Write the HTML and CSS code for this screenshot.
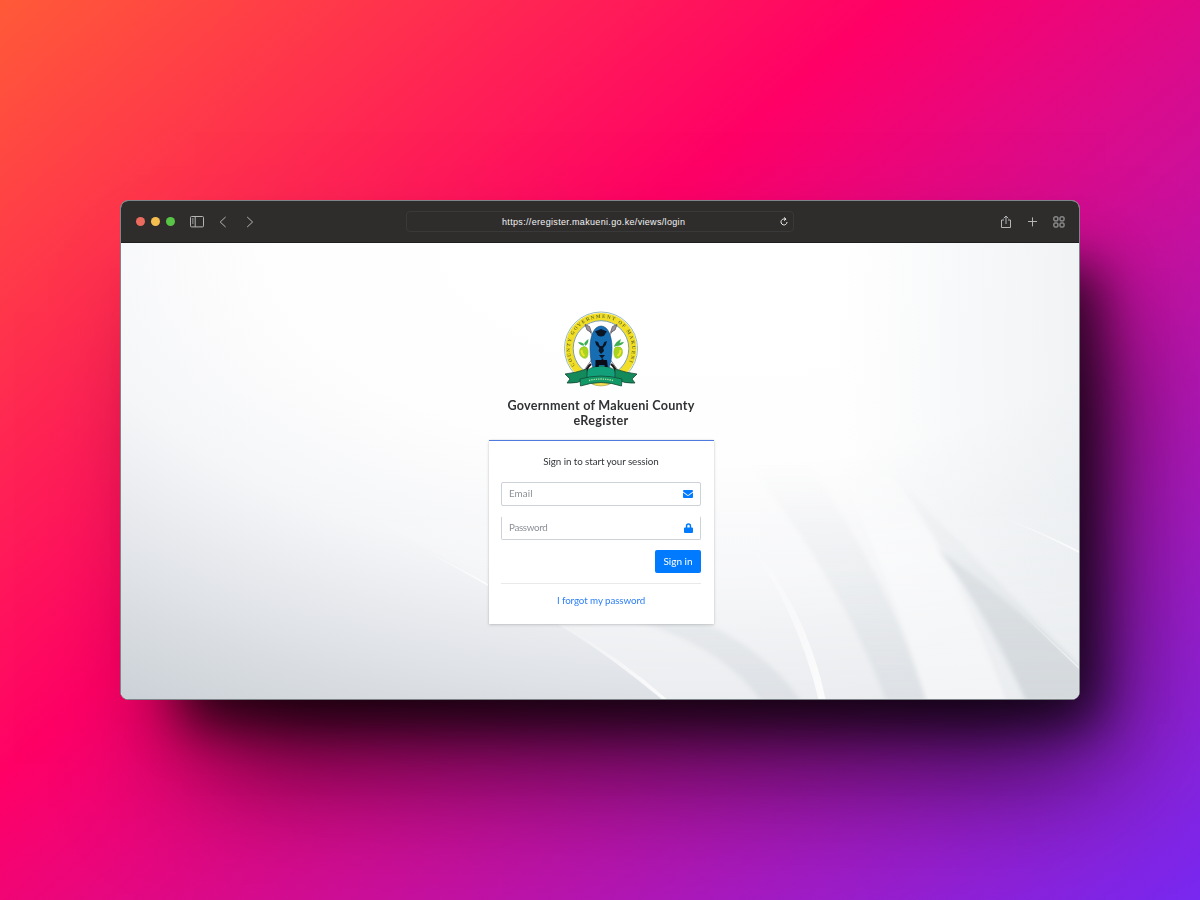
FILE: index.html
```html
<!DOCTYPE html>
<html lang="en">
<head>
<meta charset="utf-8">
<title>Government of Makueni County eRegister</title>
<link rel="stylesheet" href="styles.css">
</head>
<body>
<main class="window">
  <header class="bar">
    <div class="bar-left">
      <span class="dot red"></span><span class="dot yellow"></span><span class="dot green"></span>
      <svg class="i-side" width="14" height="12" viewBox="0 0 14 12"><rect x=".5" y=".5" width="13" height="10.4" rx="1"/><path d="M5.2 .5v10.4M2 3h1.6M2 5h1.6M2 7h1.6"/></svg>
      <svg class="i-back" width="8" height="12" viewBox="0 0 8 12"><path d="M6.6 1 1.2 6l5.4 5"/></svg>
      <svg class="i-next" width="8" height="12" viewBox="0 0 8 12"><path d="M1.2 1l5.4 5-5.4 5"/></svg>
    </div>
    <div class="address">
      <span class="url">https://eregister.makueni.go.ke/views/login</span>
      <svg class="i-reload" width="8" height="9" viewBox="0 0 8 9"><path d="M6.2 2.9A3 3 0 1 0 7 5M4 .5l2 1.6-2 1.5"/></svg>
    </div>
    <div class="bar-right">
      <svg width="12" height="14" viewBox="0 0 12 14"><path d="M4 5H1.500v7.500h9V5H8M6 9V1.200M3.700 3.300 6 1l2.300 2.300"/></svg>
      <svg width="10" height="10" viewBox="0 0 10 10"><path d="M4.500 .4v9M0 4.500h9"/></svg>
      <svg width="12" height="12" viewBox="0 0 12 12"><rect x=".9" y=".9" width="4" height="4" rx=".7"/><rect x="7" y=".9" width="4" height="4" rx=".7"/><rect x=".9" y="7" width="4" height="4" rx=".7"/><rect x="7" y="7" width="4" height="4" rx=".7"/></svg>
    </div>
  </header>
  <section class="page">
    <svg class="backdrop" width="958" height="456" viewBox="0 0 958 456">
      <defs>
        <radialGradient id="base" gradientUnits="userSpaceOnUse" cx="0" cy="0" r="1" gradientTransform="translate(600 -10) scale(1120 570)">
          <stop offset="0" stop-color="#fff"/><stop offset=".4" stop-color="#fefefe"/><stop offset=".6" stop-color="#f5f6f8"/><stop offset=".8" stop-color="#dfe2e7"/><stop offset="1" stop-color="#c8cfd4"/>
        </radialGradient>
        <linearGradient id="side" x1="0" y1="0" x2="1" y2="0"><stop offset="0" stop-color="#e3e8eb" stop-opacity="0"/><stop offset="1" stop-color="#e3e8eb" stop-opacity=".5"/></linearGradient>
        <linearGradient id="fan" gradientUnits="userSpaceOnUse" x1="0" y1="260" x2="0" y2="456"><stop offset="0" stop-color="#fff" stop-opacity="0"/><stop offset=".5" stop-color="#fff" stop-opacity=".3"/><stop offset="1" stop-color="#fff" stop-opacity=".42"/></linearGradient>
        <linearGradient id="band" gradientUnits="userSpaceOnUse" x1="0" y1="190" x2="0" y2="456"><stop offset="0" stop-color="#fff" stop-opacity="0"/><stop offset=".4" stop-color="#fff" stop-opacity=".4"/><stop offset="1" stop-color="#fff" stop-opacity=".42"/></linearGradient>
        <linearGradient id="shade" gradientUnits="userSpaceOnUse" x1="0" y1="220" x2="0" y2="456"><stop offset="0" stop-color="#b9c2c9" stop-opacity="0"/><stop offset=".45" stop-color="#b9c2c9" stop-opacity=".13"/><stop offset="1" stop-color="#b9c2c9" stop-opacity=".26"/></linearGradient>
        <linearGradient id="ray" x1="0" y1="0" x2="1" y2="1"><stop offset="0" stop-color="#fff" stop-opacity="0"/><stop offset="1" stop-color="#fff" stop-opacity=".85"/></linearGradient>
        <filter id="soft" x="-10%" y="-10%" width="120%" height="120%"><feGaussianBlur stdDeviation="2"/></filter>
      </defs>
      <rect width="958" height="456" fill="url(#base)"/>
      <rect x="720" width="238" height="456" fill="url(#side)"/>
      <path d="M240 270Q310 306 367 341Q460 390 545 458H958V200Z" fill="url(#fan)"/>
      <g filter="url(#soft)">
        <path d="M650 170Q760 310 805 458H765Q722 340 620 210Z" fill="url(#shade)"/>
        <path d="M700 190L770 230Q840 330 885 458H806Q765 320 700 190Z" fill="url(#band)"/>
        <path d="M775 235Q840 330 905 458H960V425Q850 310 775 235Z" fill="url(#shade)"/>
        <path d="M815 305Q875 380 905 458H960V425Q880 350 815 305Z" fill="#b8c3c6" opacity=".26"/>
        <path d="M560 370Q640 400 680 458H640Q600 400 500 374Z" fill="url(#shade)"/>
      </g>
      <path d="M620 290Q685 360 705 458H698Q674 360 620 290Z" fill="url(#ray)"/>
      <path d="M442 382Q500 415 548 458H543Q490 415 442 382Z" fill="url(#ray)"/>
      <path d="M295 303Q335 322 367 341V343Q330 322 295 303Z" fill="url(#ray)"/>
      <path d="M865 268Q920 288 958 308V310Q920 290 865 268Z" fill="url(#ray)"/>
      <path d="M880 350Q915 383 958 424V426Q915 385 880 350Z" fill="url(#ray)" opacity=".7"/>
    </svg>
    <div class="login">
      <svg class="crest" width="76" height="78" viewBox="0 0 76 78">
        <defs><path id="arc" d="M12.500 56.500A31 31 0 1 1 63.500 56.500"/></defs>
        <circle cx="38" cy="38.5" r="36.500" fill="#fff" stroke="#7aa3a6" stroke-width=".8"/>
        <circle cx="38" cy="38.5" r="31.800" fill="none" stroke="#f2de25" stroke-width="7.600"/>
        <circle cx="38" cy="38.5" r="27.800" fill="#fff" stroke="#5c8796" stroke-width=".8"/>
        <text class="motto"><textPath href="#arc" startOffset="1" textLength="128">COUNTY GOVERNMENT OF MAKUENI</textPath></text>
        <g stroke="#5e5a65" stroke-width=".8" fill="#9a949e"><path d="M22 15 57 63M54 15 19 63"/><path d="M22 14.500l4.500 2 2 6-4.500-2.500zM54 14.500l-4.500 2-2 6 4.500-2.500z"/></g>
        <g fill="#3fae52"><path d="M15 32q5 0 8 4-6 0-8-4zM25.500 29q-5 3-5 8 5-2 5-8zM61 32q-5 0-8 4 6 0 8-4zM58 29q-6 3-7 8 6-2 7-8z"/></g>
        <g fill="#a9d51f" stroke="#8bbd25" stroke-width=".5"><path d="M20.500 37c4-1 5 3 4.500 7s-2 5-4.500 4-4-3-4-6 1-5 4-5zM55.500 37c-4-1-5 3-4.500 7s2 5 4.500 4 4-3 4-6-1-5-4-5z"/></g>
        <path d="M18.500 40q0 4 3 6M57.500 40q0 4-3 6" stroke="#f0e52e" stroke-width="2" fill="none"/>
        <path d="M38 16C31 16 27 26 27 38q0 14 4 22h14q4-8 4-22C49 26 45 16 38 16Z" fill="#176db2" stroke="#114a84" stroke-width=".6"/>
        <path d="M32 21.500l6-2.500 6 2.500-1.600 2q-.8 3-4.400 3t-4.400-3z" fill="#0a1626"/>
        <path d="M32 31l3 1 1.800 4h2.600l2-4 2.600-1-1.200 4-2.600 3 .8 3-3 3-2.400-3 .6-3-3-3zM36 45h6l-3 3.500 2 .5-3 2.500.8-3z" fill="#0a1626"/>
        <path d="M12 64Q24 61 28 58 38 54 48 58 52 61 64 64L57 72H19Z" fill="#12a07b" stroke="#12664a" stroke-width=".7"/>
        <path d="M32.500 50h11.500l.8 7h-2.600l-1-2h-5l-.8 2h-3z" fill="#0a0d18"/>
        <path d="M28 54q-5 4-5 9M48 54q5 4 5 9" stroke="#211819" stroke-width="2.200"/>
        <path d="M2 64q10-1 22-5v10q-10 5-20 4l3-4zM74 64q-10-1-22-5v10q10 5 20 4l-3-4z" fill="#128a5c" stroke="#174936" stroke-width=".8"/>
        <path d="M28 73q10-3 20 0-3 3-10 3t-10-3z" fill="#f4dc4c" stroke="#777b51" stroke-width=".4"/>
        <path d="M17 69Q38 63 59 69L58.500 76Q38 69 17.500 76Z" fill="#119a67" stroke="#174936" stroke-width=".8"/>
        <path d="M26 70.500Q38 67.500 50 70.500" fill="none" stroke="#b5e3a1" stroke-width="1.300" stroke-dasharray="1.300 1"/>
      </svg>
      <h1><span class="line-one">Government of Makueni County</span><br><span class="line-two">eRegister</span></h1>
      <form class="card">
        <p class="intro">Sign in to start your session</p>
        <div class="field"><span class="ph-email">Email</span><svg width="10" height="8" viewBox="0 0 10 8"><path d="M1 0h8q1 0 1 1v.5L5.600 4.800q-.6.400-1.200 0L0 1.500V1q0-1 1-1zM0 2.600 4 5.500q1 .7 2 0l4-2.900V7q0 1-1 1H1Q0 8 0 7z" fill="#007bff"/></svg></div>
        <div class="field pass"><span class="ph-pass">Password</span><svg class="lock" width="9" height="10" viewBox="0 0 9 10"><path d="M1.800 4.500V3a2.700 2.700 0 0 1 5.400 0v1.500H8q1 0 1 1V9q0 1-1 1H1Q0 10 0 9V5.500q0-1 1-1zm1.500 0h2.400V3a1.200 1.200 0 0 0-2.400 0z" fill="#007bff"/></svg></div>
        <button class="submit" type="button">Sign in</button>
        <hr>
        <a class="forgot">I forgot my password</a>
      </form>
    </div>
  </section>
</main>
</body>
</html>
```
FILE: styles.css
```css
* { box-sizing: border-box; }
body {
  margin: 0; height: 900px; overflow: hidden;
  display: flex; align-items: center; justify-content: center;
  background: linear-gradient(139deg, #ff5a38 0%, #ff0066 40%, #7828f0 100%);
  font-family: Lato, "Open Sans", sans-serif;
}
.window {
  width: 960px; height: 500px; border: 1px solid #7f8488; border-radius: 8px;
  display: flex; flex-direction: column; overflow: hidden; background: #fff;
  box-shadow: 40px 46px 48px -22px rgba(0,0,0,.7), 50px 88px 120px -24px rgba(0,0,0,.72);
}
.bar {
  height: 42px; background: #2e2d2c; border-bottom: 1px solid #201f1f;
  display: grid; grid-template-columns: 285px 388px 285px; align-items: center;
}
.bar svg { fill: none; stroke: #b5b5b5; stroke-width: 1; flex: none; }
.bar-left { display: flex; align-items: center; padding-left: 15px; }
.dot { width: 9px; height: 9px; border-radius: 50%; margin-right: 6px; }
.red { background: #ed6a5f; }
.yellow { background: #f5bf4f; }
.green { background: #58c547; }
.i-side { margin-left: 9px; }
.i-back { margin-left: 15px; }
.i-next { margin-left: 19px; }
.address {
  height: 21px; border: 1px solid #3a3939; border-radius: 4px;
  display: flex; align-items: center; padding: 0 5px 0 95px; justify-content: space-between;
}
.url { font: 9px/12px "Liberation Sans", Arial, sans-serif; color: #f4f4f4; letter-spacing: .33px; white-space: nowrap; }
.bar .i-reload { stroke: #eee; }
.bar-right { display: flex; align-items: center; justify-content: flex-end; gap: 15.500px; padding-right: 14px; }
.page { position: relative; flex: 1; display: flex; justify-content: center; }
.backdrop { position: absolute; inset: 0; }
.login { position: relative; width: 226px; margin-left: 2px; padding-top: 67px; display: flex; flex-direction: column; align-items: center; }
.crest { display: block; }
.motto { font: 700 5px "Liberation Serif", serif; fill: #68702a; }
h1 { margin: 10px 0 12px; font-size: 12.600px; line-height: 15px; font-weight: 700; color: #303234; text-align: center; white-space: nowrap; }
.line-one { letter-spacing: .24px; }
.line-two { letter-spacing: .3px; }
.card {
  width: 225px; height: 184px; background: #fff; border-top: 1.500px solid #4f7be0; padding: 0 12.500px;
  box-shadow: 0 0 2px rgba(0,0,0,.1), 0 1px 3px rgba(0,0,0,.16); display: flex; flex-direction: column;
  font-size: 9.800px; line-height: 14px;
}
.intro { margin: 13px 0 14px; color: #33363a; text-align: center; letter-spacing: -.08px; }
.field { height: 24px; flex: none; border: 1px solid #cdd2d9; border-radius: 2px; display: flex; align-items: center; justify-content: space-between; padding: 0 7px; color: #8c9196; }
.field span { margin-top: -2px; }
.field .lock { margin-top: -1px; }
.ph-pass { letter-spacing: -.35px; }
.ph-email { letter-spacing: .1px; }
.pass { margin-top: 10px; border-top-color: transparent; }
.submit { align-self: flex-end; width: 46px; height: 23px; flex: none; margin-top: 10px; padding: 0 0 2px; border: 0; border-radius: 2px; background: #007bff; color: #fff; font: 10px/14px Lato, sans-serif; }
hr { width: 100%; height: 1px; flex: none; border: 0; background: #e8e9eb; margin: 10px 0 9px; }
.forgot { color: #2f80f5; text-align: center; letter-spacing: -.1px; }
```
